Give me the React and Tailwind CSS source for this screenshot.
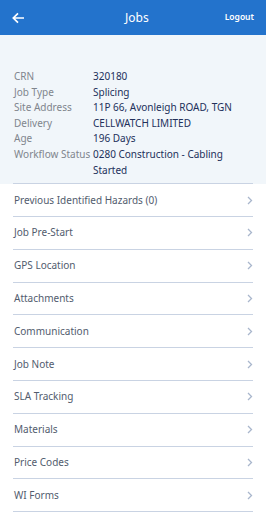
import React from 'react';

const info = [
  ['CRN', '320180'],
  ['Job Type', 'Splicing'],
  ['Site Address', '11P 66, Avonleigh ROAD, TGN'],
  ['Delivery', 'CELLWATCH LIMITED'],
  ['Age', '196 Days'],
  ['Workflow Status', '0280 Construction - Cabling Started'],
];

const items = [
  'Previous Identified Hazards (0)',
  'Job Pre-Start',
  'GPS Location',
  'Attachments',
  'Communication',
  'Job Note',
  'SLA Tracking',
  'Materials',
  'Price Codes',
  'WI Forms',
];

function Chevron() {
  return (
    <svg width="6" height="9" viewBox="0 0 6 9" fill="none">
      <path d="M1 1l3.5 3.5L1 8" stroke="#a9b6cc" strokeWidth="1.3" />
    </svg>
  );
}

export default function App() {
  return (
    <div className="w-[266px] h-[512px] overflow-hidden bg-white" style={{ fontFamily: '"Noto Sans", sans-serif' }}>
      <div className="h-[35px] bg-[#2373cc] flex items-center justify-between px-[12px] text-white">
        <svg width="13" height="12" viewBox="0 0 13 12" fill="none">
          <path d="M12 6H1.5M6 1.3L1.3 6 6 10.7" stroke="white" strokeWidth="1.7" />
        </svg>
        <span className="text-[12px] ml-[24px]">Jobs</span>
        <span className="text-[8.5px] font-semibold">Logout</span>
      </div>

      <div className="bg-[#f1f6fa] pt-[34px] pb-[5px] px-[14px] text-[10px] leading-[15.6px]">
        {info.map(([k, v]) => (
          <div key={k} className="flex">
            <div className="w-[79px] shrink-0 text-[#80858d]">{k}</div>
            <div className="text-[#22305a] pr-[14px]">{v}</div>
          </div>
        ))}
      </div>

      <div className="bg-[#f1f6fa]">
        <div className="mx-[13px] h-px bg-[#c9d3e3]"></div>
      </div>
      <div className="bg-white">
        {items.map((t) => (
          <div key={t} className="mx-[13px] h-[32.8px] border-b border-[#c9d3e3] flex items-center justify-between pl-[1px] pr-0">
            <span className="text-[10px] text-[#525c6e]">{t}</span>
            <Chevron />
          </div>
        ))}
      </div>
    </div>
  );
}
